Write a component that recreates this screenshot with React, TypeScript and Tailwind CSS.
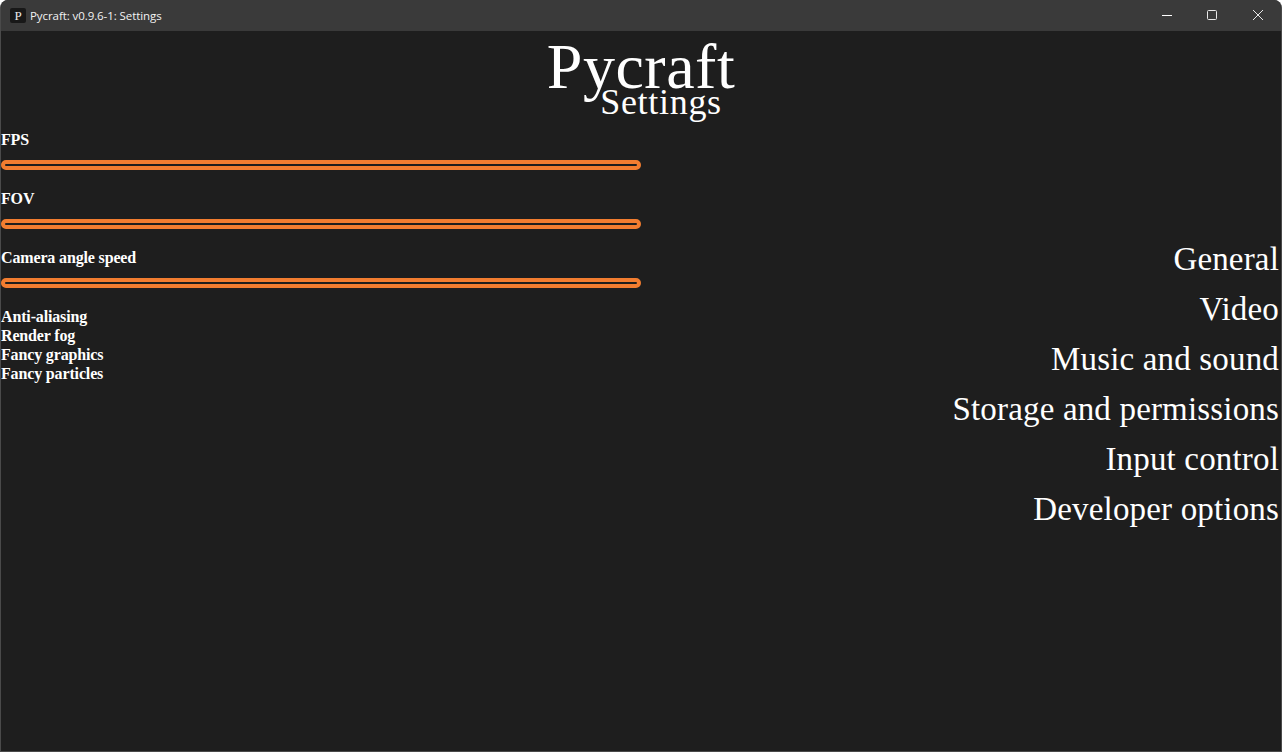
export default function App() {
  const sliders = ["FPS", "FOV", "Camera angle speed"];
  const toggles = ["Anti-aliasing", "Render fog", "Fancy graphics", "Fancy particles"];
  const menu = ["General", "Video", "Music and sound", "Storage and permissions", "Input control", "Developer options"];
  return (
    <div className="w-[1282px] h-[752px] flex flex-col bg-[#1e1e1e] border border-[#4a4a4a] border-t-0 rounded-t-lg overflow-hidden font-['Liberation_Serif',serif] text-white">
      <div className="h-[31px] shrink-0 bg-[#3a3a3a] flex items-center pl-[9px] font-['Open_Sans',sans-serif] text-[11.5px]">
        <div className="w-[16px] h-[15px] rounded-[2px] bg-[#181818] flex items-center justify-center text-[13px] leading-none font-['Liberation_Serif',serif] text-[#e8e8e8]">P</div>
        <span className="ml-[4px] text-[#f2f2f2] tracking-[-0.08px]">Pycraft: v0.9.6-1: Settings</span>
        <div className="ml-auto flex items-start self-start">
          <svg width="46" height="30" viewBox="0 0 46 30" fill="none" stroke="#fff" strokeWidth="1"><path d="M19 15.5H29" /></svg>
          <svg width="46" height="30" viewBox="0 0 46 30" fill="none" stroke="#e8e8e8" strokeWidth="1"><rect x="18.5" y="10.5" width="9" height="9" rx="1" /></svg>
          <svg width="46" height="30" viewBox="0 0 46 30" fill="none" stroke="#e8e8e8" strokeWidth="1"><path d="M18 10L28 20M28 10L18 20" /></svg>
        </div>
      </div>
      <div className="flex flex-col items-center h-[99px] shrink-0">
        <div className="text-[64px] leading-[70px] mt-[1px] tracking-[0.5px]">Pycraft</div>
        <div className="text-[36px] leading-[36px] -mt-[18px] ml-[40px] tracking-[0.7px]">Settings</div>
      </div>
      <div className="flex justify-between items-start">
        <div className="flex flex-col w-[640px]">
          {sliders.map((s) => (
            <div key={s} className="h-[59px] flex flex-col">
              <div className="text-[16px] leading-[19px] h-[19px] font-bold tracking-[-0.15px]">{s}</div>
              <div className="mt-[11px] h-[10px] w-[640px] border-[4px] border-[#f27d30] rounded-full" />
            </div>
          ))}
          {toggles.map((s) => (
            <div key={s} className="text-[16px] leading-[19px] h-[19px] font-bold tracking-[-0.15px]">{s}</div>
          ))}
        </div>
        <div className="flex flex-col items-end mt-[104px] pr-[2px]">
          {menu.map((m) => (
            <div key={m} className="text-[33px] leading-[50px] h-[50px] tracking-[0.17px]">{m}</div>
          ))}
        </div>
      </div>
    </div>
  );
}
